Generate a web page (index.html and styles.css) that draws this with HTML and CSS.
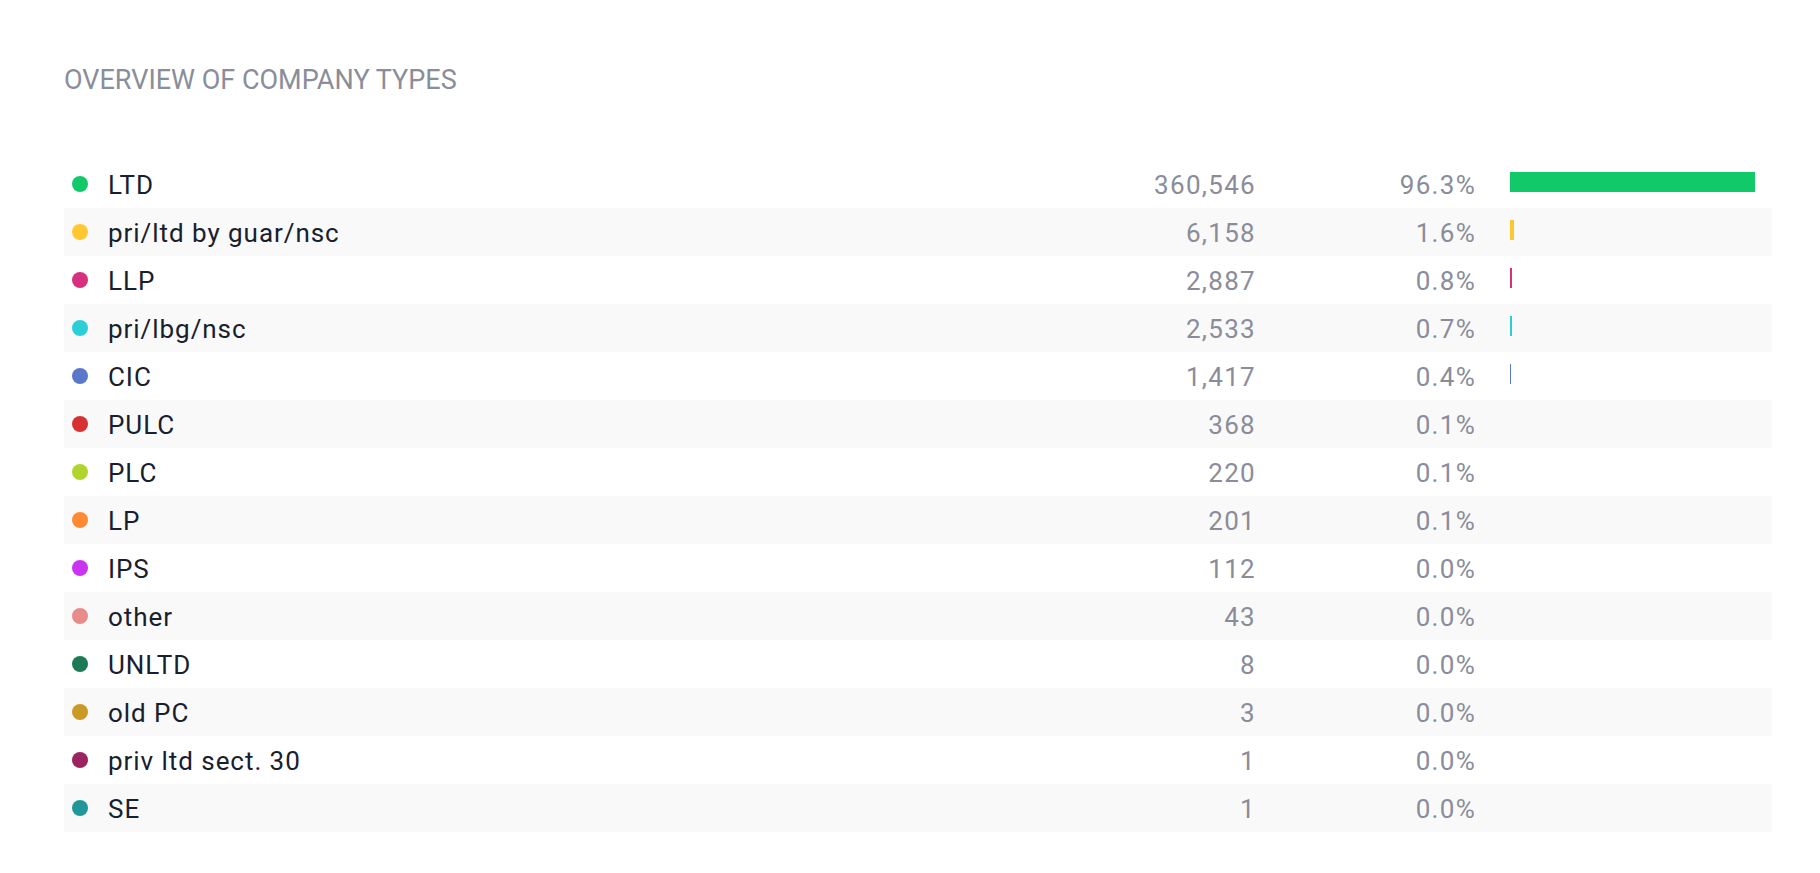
FILE: index.html
```html
<!DOCTYPE html>
<html>
<head>
	<meta charset="utf-8">
	<meta name="viewport" content="width=device-width, initial-scale=1">
	<title>Overview of company types</title>
	<link rel="stylesheet" href="styles.css">
</head>
<body>
<div class="panel">
	<h2 class="title">OVERVIEW OF COMPANY TYPES</h2>

	<div class="types">
		<div class="row">
			<span class="dot c-ltd"></span>
			<span class="name">LTD</span>
			<span class="count">360,546</span>
			<span class="pct">96.3%</span>
			<span class="track"><span class="bar c-ltd" style="width: 96.3%"></span></span>
		</div>
		<div class="row">
			<span class="dot c-guar"></span>
			<span class="name">pri/ltd by guar/nsc</span>
			<span class="count">6,158</span>
			<span class="pct">1.6%</span>
			<span class="track"><span class="bar c-guar" style="width: 1.6%"></span></span>
		</div>
		<div class="row">
			<span class="dot c-llp"></span>
			<span class="name">LLP</span>
			<span class="count">2,887</span>
			<span class="pct">0.8%</span>
			<span class="track"><span class="bar c-llp" style="width: 0.8%"></span></span>
		</div>
		<div class="row">
			<span class="dot c-lbg"></span>
			<span class="name">pri/lbg/nsc</span>
			<span class="count">2,533</span>
			<span class="pct">0.7%</span>
			<span class="track"><span class="bar c-lbg" style="width: 0.7%"></span></span>
		</div>
		<div class="row">
			<span class="dot c-cic"></span>
			<span class="name">CIC</span>
			<span class="count">1,417</span>
			<span class="pct">0.4%</span>
			<span class="track"><span class="bar c-cic" style="width: 0.4%"></span></span>
		</div>
		<div class="row">
			<span class="dot c-pulc"></span>
			<span class="name">PULC</span>
			<span class="count">368</span>
			<span class="pct">0.1%</span>
			<span class="track"></span>
		</div>
		<div class="row">
			<span class="dot c-plc"></span>
			<span class="name">PLC</span>
			<span class="count">220</span>
			<span class="pct">0.1%</span>
			<span class="track"></span>
		</div>
		<div class="row">
			<span class="dot c-lp"></span>
			<span class="name">LP</span>
			<span class="count">201</span>
			<span class="pct">0.1%</span>
			<span class="track"></span>
		</div>
		<div class="row">
			<span class="dot c-ips"></span>
			<span class="name">IPS</span>
			<span class="count">112</span>
			<span class="pct">0.0%</span>
			<span class="track"></span>
		</div>
		<div class="row">
			<span class="dot c-other"></span>
			<span class="name">other</span>
			<span class="count">43</span>
			<span class="pct">0.0%</span>
			<span class="track"></span>
		</div>
		<div class="row">
			<span class="dot c-unltd"></span>
			<span class="name">UNLTD</span>
			<span class="count">8</span>
			<span class="pct">0.0%</span>
			<span class="track"></span>
		</div>
		<div class="row">
			<span class="dot c-oldpc"></span>
			<span class="name">old PC</span>
			<span class="count">3</span>
			<span class="pct">0.0%</span>
			<span class="track"></span>
		</div>
		<div class="row">
			<span class="dot c-priv"></span>
			<span class="name">priv ltd sect. 30</span>
			<span class="count">1</span>
			<span class="pct">0.0%</span>
			<span class="track"></span>
		</div>
		<div class="row">
			<span class="dot c-se"></span>
			<span class="name">SE</span>
			<span class="count">1</span>
			<span class="pct">0.0%</span>
			<span class="track"></span>
		</div>
	</div>
</div>
</body>
</html>
```

FILE: styles.css
```css
body{
	margin: 0;
	background: #fff;
	font-family: Roboto, "Liberation Sans", sans-serif;
}
.panel{
	padding: 61px 48px 0 64px;
}
.title{
	margin: 0;
	font-size: 27px;
	font-weight: 400;
	line-height: 38px;
	color: #8a8e99;
}
.types{
	margin-top: 61px;
}
.row{
	display: flex;
	align-items: center;
	height: 48px;
	padding: 0 8px;
	font-size: 26px;
}
.row:nth-child(even){
	background: #f9f9f9;
}
.dot{
	flex: none;
	width: 16px;
	height: 16px;
	margin-right: 20px;
	border-radius: 50%;
}
.name{
	flex: 1;
	padding-top: 2px;
	color: #18202e;
	letter-spacing: 0.95px;
}
.count, .pct{
	flex: none;
	padding-top: 2px;
	text-align: right;
	color: #8a8d99;
	letter-spacing: 1.3px;
}
.count{
	width: 200px;
}
.pct{
	width: 220px;
}
.track{
	flex: none;
	width: 254px;
	height: 20px;
	margin-left: 34px;
	position: relative;
	top: -2px;
}
.bar{
	display: block;
	height: 20px;
	min-width: 1px;
}

.c-ltd{ background: #12c96a; }
.c-guar{ background: #ffc832; }
.c-llp{ background: #d6307f; }
.c-lbg{ background: #2dcfd6; }
.c-cic{ background: #5a78c9; }
.c-pulc{ background: #d63232; }
.c-plc{ background: #b0d62e; }
.c-lp{ background: #ff8a33; }
.c-ips{ background: #c834f0; }
.c-other{ background: #e88b8b; }
.c-unltd{ background: #1e7a55; }
.c-oldpc{ background: #c99a25; }
.c-priv{ background: #9a2360; }
.c-se{ background: #22979a; }
```
